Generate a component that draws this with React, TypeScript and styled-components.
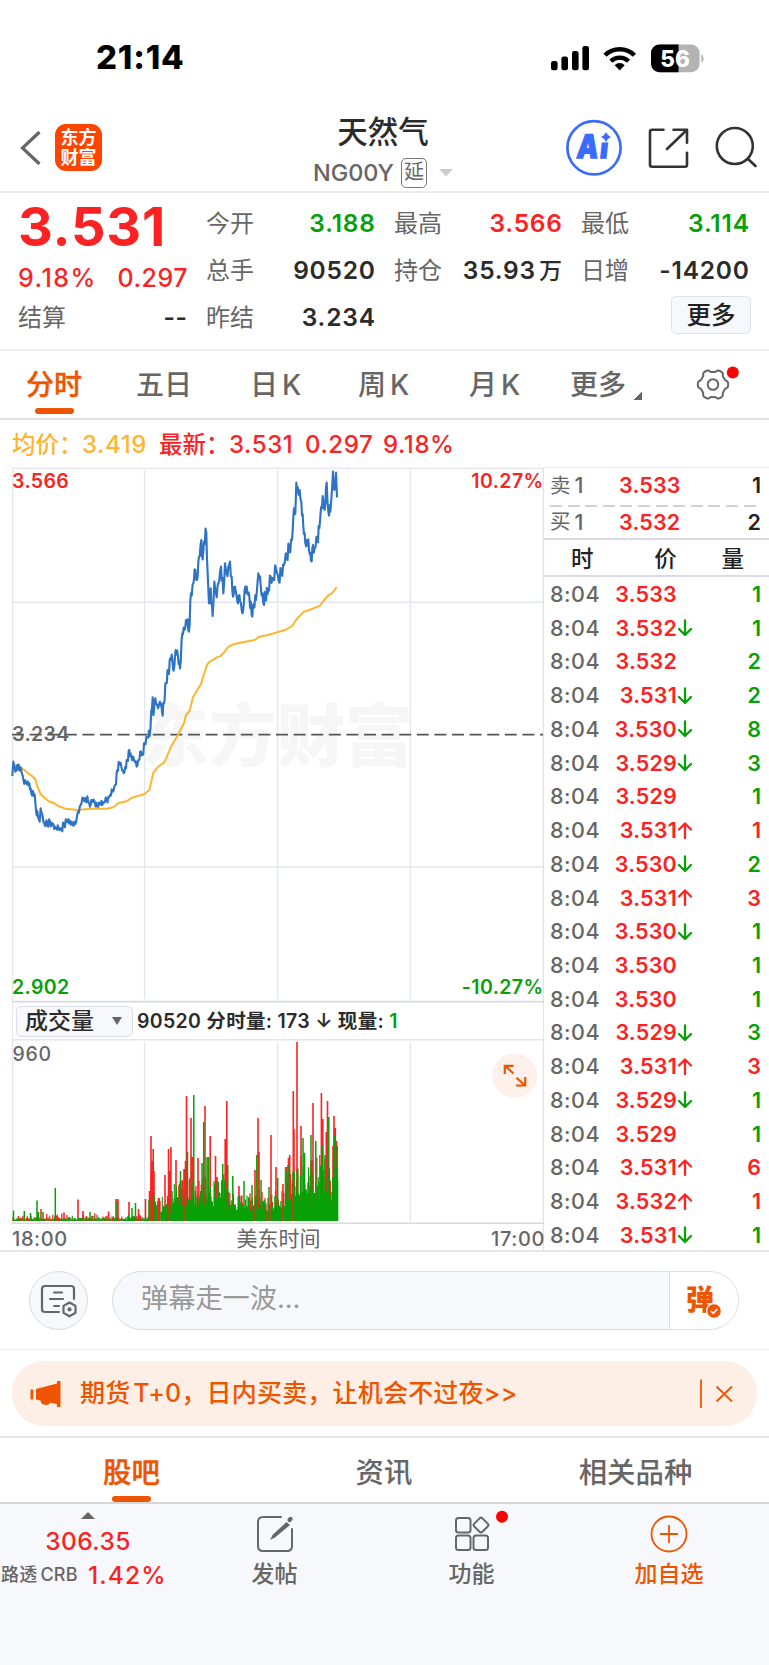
import React from "react";
import styled, { createGlobalStyle } from "styled-components";

const RED = "#fa2222";
const GREEN = "#07a007";
const ORANGE = "#ee5500";
const GRAY = "#666";
const INK = "#2b2b2b";
const FONT = `Inter, "Noto Sans CJK SC", sans-serif`;

const Global = createGlobalStyle`
  * { box-sizing: border-box; }
  body { margin: 0; background: #fff; font-family: ${FONT}; color: ${INK}; line-height: 1.25; }
  svg { display: block; flex: none; overflow: visible; }
  svg text { font-family: ${FONT}; }
`;

const Page = styled.div`
  width: 769px;
  height: 1665px;
  display: flex;
  flex-direction: column;
  overflow: hidden;
  white-space: nowrap;
`;

/* status bar */
const StatusBar = styled.div`
  height: 108px;
  padding: 44px 62px 0 96px;
  display: flex;
  justify-content: space-between;
  align-items: flex-start;
`;
const Clock = styled.div`
  font-size: 33px;
  line-height: 27px;
  font-weight: 800;
  letter-spacing: 0.8px;
  color: #000;
`;

/* title bar */
const TitleBar = styled.header`
  height: 85px;
  border-bottom: 2px solid #ececec;
  display: grid;
  grid-template-columns: 230px 1fr 230px;
`;
const TitleLeft = styled.div`
  display: flex;
  align-items: flex-start;
  padding: 16px 0 0 20px;
  gap: 13px;
`;
const AppLogo = styled.div`
  width: 47px;
  height: 47px;
  border-radius: 11px;
  background: #ff4400;
  color: #fff;
  font-size: 18px;
  line-height: 19.5px;
  font-weight: 700;
  text-align: center;
  padding-top: 4px;
`;
const TitleCenter = styled.div`
  display: flex;
  flex-direction: column;
  align-items: center;
  padding-right: 3px;
`;
const Title = styled.div`
  font-size: 30.5px;
  line-height: 36px;
  margin-top: 6px;
  font-weight: 500;
`;
const SubTitle = styled.div`
  display: flex;
  align-items: center;
  height: 30px;
  margin-top: 8px;
  font-size: 23.5px;
  font-weight: 500;
  letter-spacing: -0.1px;
  color: ${GRAY};
`;
const DelayTag = styled.span`
  width: 26px;
  height: 30px;
  margin: 0 12px 0 7px;
  border: 1.5px solid #777;
  border-radius: 5px;
  font-size: 20px;
  line-height: 27px;
  font-weight: 400;
  text-align: center;
`;
const TitleRight = styled.div`
  display: flex;
  align-items: flex-start;
  padding-top: 11px;
  padding-left: 27px;
`;

/* quote summary */
const Quote = styled.section`
  height: 158px;
  border-bottom: 2px solid #efefef;
  padding: 7px 19px 0 18px;
  display: grid;
  grid-template-columns: 169px 169px 168px 168px;
  column-gap: 19px;
`;
const QuoteCol = styled.div`
  display: flex;
  flex-direction: column;
`;
const BigPrice = styled.div`
  font-size: 54px;
  line-height: 54px;
  height: 54px;
  font-weight: 700;
  letter-spacing: 0.8px;
  color: ${RED};
`;
const ChangeRow = styled.div`
  display: flex;
  justify-content: space-between;
  height: 40px;
  line-height: 48px;
  font-size: 25px;
  font-weight: 500;
  letter-spacing: 0.5px;
  margin-right: -1px;
  color: ${RED};
`;
const Percent = styled.span`
  letter-spacing: 1.5px;
`;
const Pair = styled.div<{ $color?: string }>`
  display: flex;
  justify-content: space-between;
  align-items: center;
  height: 47px;
  font-size: 24.5px;
  font-weight: 600;
  color: ${(p) => p.$color || INK};
`;
const PairLabel = styled.span`
  font-size: 24px;
  font-weight: 400;
  color: ${GRAY};
`;
const Num = styled.span`
  letter-spacing: 0.8px;
  margin-right: -0.8px;
`;
const Unit = styled.span`
  margin-left: 3px;
  font-size: 23px;
  font-weight: 500;
`;
const MoreButton = styled.button`
  align-self: flex-end;
  width: 80px;
  height: 38px;
  margin: 2px -2px 0 0;
  padding: 0;
  border: 1.5px solid #dfe1e8;
  border-radius: 5px;
  background: #f7f8fb;
  font: 500 24.5px/35px ${FONT};
  color: #222;
`;

/* period tabs */
const PeriodTabs = styled.nav`
  height: 69px;
  border-bottom: 2px solid #e1e1e7;
  padding: 0 0 0 26px;
  display: flex;
`;
const PeriodTab = styled.div<{ $w: number; $active?: boolean }>`
  width: ${(p) => p.$w}px;
  font-size: 28px;
  line-height: 69px;
  font-weight: 500;
  color: ${(p) => (p.$active ? ORANGE : GRAY)};
  -webkit-text-stroke: ${(p) => (p.$active ? "0.4px" : "0")} currentColor;
  display: flex;
  gap: 4px;
  position: relative;
`;
const Underline = styled.i<{ $left: number; $top: number }>`
  position: absolute;
  left: ${(p) => p.$left}px;
  top: ${(p) => p.$top}px;
  width: 39px;
  height: 6px;
  border-radius: 3px;
  background: ${ORANGE};
`;
const Corner = styled.i`
  width: 8px;
  height: 8px;
  margin: 41px 0 0 4px;
  background: linear-gradient(135deg, transparent 50%, ${GRAY} 50%);
`;
const GearBox = styled.div`
  margin: 15px 0 0 1px;
`;

/* average / latest line */
const Legend = styled.div`
  height: 47px;
  padding: 3px 0 0 12px;
  display: flex;
  align-items: center;
  font-size: 24px;
  font-weight: 500;
  color: ${RED};
`;
const LegendItem = styled.span<{ $w: number; $color?: string; $cjk?: boolean }>`
  width: ${(p) => p.$w}px;
  color: ${(p) => p.$color || RED};
  font-size: ${(p) => (p.$cjk ? 23.5 : 24)}px;
  letter-spacing: ${(p) => (p.$cjk ? 0 : 0.6)}px;
`;

/* market body */
const Market = styled.section`
  height: 785px;
  display: flex;
  border-bottom: 2px solid #e6e6ea;
`;
const ChartCol = styled.div`
  width: 532px;
  margin-left: 12px;
  display: flex;
  flex-direction: column;
`;
const VolumeBar = styled.div`
  height: 36px;
  flex: none;
  display: flex;
  align-items: center;
  padding-left: 3px;
  border-left: 1px solid #e6e8f0;
  border-right: 1.5px solid #dfe3ea;
  font-size: 19.5px;
  font-weight: 600;
  letter-spacing: 0.3px;
`;
const IndicatorSelect = styled.div`
  width: 117px;
  height: 31px;
  margin-right: 4px;
  padding: 0 10px 0 8px;
  display: flex;
  align-items: center;
  justify-content: space-between;
  border: 1.5px solid #dcdee6;
  border-radius: 5px;
  background: #f7f8fb;
  font-size: 23px;
  font-weight: 500;
  letter-spacing: 0;
`;
const Axis = styled.div`
  height: 25px;
  flex: none;
  display: flex;
  align-items: center;
  justify-content: space-between;
  padding-top: 3px;
  border-right: 1.5px solid #dfe3ea;
  font-size: 20px;
  font-weight: 500;
  letter-spacing: 0.6px;
  color: ${GRAY};
`;
const AxisMid = styled.span`
  font-size: 21px;
  font-weight: 400;
  letter-spacing: 0;
  margin-right: 2px;
`;
const AxisEnd = styled.span`
  margin-right: -2px;
`;

const BookCol = styled.div`
  width: 225px;
  display: flex;
  flex-direction: column;
  font-size: 21.5px;
  font-weight: 600;
`;
const BookTop = styled.div`
  height: 73px;
  flex: none;
  border-top: 1.5px solid #e9e9ec;
  border-bottom: 2px solid #d9dae2;
  padding: 0 0 0 6px;
`;
const DashLine = styled.div`
  height: 2px;
  width: 206px;
  background: repeating-linear-gradient(90deg, #cfd2da 0 12px, transparent 12px 17.6px);
`;
const Level = styled.div<{ $h: number; $pb?: number }>`
  height: ${(p) => p.$h}px;
  padding: 0 8px ${(p) => p.$pb || 0}px 0;
  display: grid;
  grid-template-columns: 69px 1fr 55px;
  align-items: center;
`;
const LevelName = styled.span`
  font-size: 20.5px;
  color: ${GRAY};
  font-weight: 400;
  display: flex;
  align-items: center;
  gap: 4px;
`;
const Digit = styled.b`
  font-size: 21.5px;
  font-weight: 500;
`;
const LevelPrice = styled.span`
  color: ${RED};
  letter-spacing: 0.2px;
`;
const Qty = styled.span<{ $color?: string }>`
  color: ${(p) => p.$color || "#222"};
  text-align: right;
`;
const TapeHead = styled.div`
  height: 37px;
  flex: none;
  border-bottom: 2px solid #d9dae2;
  padding: 4px 25px 0 27px;
  display: flex;
  justify-content: space-between;
  align-items: center;
  font-size: 22.5px;
  font-weight: 500;
  color: #222;
`;
const PriceHead = styled.span`
  margin-left: 16px;
`;
const TapeRow = styled.div`
  height: 33.74px;
  flex: none;
  padding: 1px 8px 0 6px;
  display: grid;
  grid-template-columns: 52px 75px 16px 1fr;
  align-items: center;
`;
const TapeTime = styled.span`
  color: ${GRAY};
  font-weight: 500;
  letter-spacing: 0.5px;
`;
const TapePrice = styled.span`
  color: ${RED};
  text-align: right;
  letter-spacing: 0.2px;
`;

/* comment bar */
const CommentBar = styled.section`
  height: 98px;
  border-bottom: 1.5px solid #f1f1f3;
  padding: 19px 30px 0 29px;
  display: flex;
  justify-content: space-between;
`;
const RoundButton = styled.div`
  width: 59px;
  height: 59px;
  border: 1px solid #d9dbe2;
  border-radius: 50%;
  background: #f7f8fb;
  display: grid;
  place-items: center;
`;
const InputPill = styled.div`
  width: 627px;
  height: 59px;
  border: 1.2px solid #d9dbe2;
  border-radius: 30px;
  background: #f7f8fb;
  display: flex;
  overflow: hidden;
`;
const Placeholder = styled.div`
  flex: 1;
  padding-left: 28px;
  font-size: 27.2px;
  line-height: 54px;
  color: #999;
`;
const SendPart = styled.div`
  width: 69px;
  border-left: 1.2px solid #d9dbe2;
  background: #fff;
  padding: 8px 0 0 16px;
`;

/* promo */
const PromoWrap = styled.section`
  height: 88px;
  border-bottom: 2px solid #e6e6e8;
  padding: 11px 12px 0;
`;
const Promo = styled.div`
  height: 65px;
  border-radius: 32px;
  background: #fdeee6;
  color: ${ORANGE};
  display: flex;
  align-items: center;
  padding: 0 24px 0 18px;
`;
const PromoText = styled.div`
  flex: 1;
  padding: 1px 0 0 19px;
  font-size: 25px;
  font-weight: 500;
  letter-spacing: 0.2px;
  word-spacing: -4px;
`;

/* content tabs */
const ContentTabs = styled.nav`
  height: 66px;
  border-bottom: 2px solid #d5d7db;
  display: grid;
  grid-template-columns: 263px 242px 261px;
`;
const ContentTab = styled.div<{ $active?: boolean }>`
  text-align: center;
  font-size: 28.4px;
  line-height: 70px;
  font-weight: 500;
  color: ${(p) => (p.$active ? ORANGE : GRAY)};
  -webkit-text-stroke: ${(p) => (p.$active ? "0.4px" : "0")} currentColor;
  position: relative;
`;

/* bottom bar */
const BottomBar = styled.footer`
  flex: 1;
  background: #f7f8fb;
  display: grid;
  grid-template-columns: 176px 197px 197px 198px;
`;
const IndexCell = styled.div`
  display: flex;
  flex-direction: column;
  align-items: center;
  padding-top: 8px;
  color: ${RED};
  font-size: 24.5px;
  font-weight: 500;
`;
const IndexValue = styled.div`
  line-height: 30px;
  margin-top: 7px;
  letter-spacing: 0.4px;
`;
const IndexRow = styled.div`
  align-self: flex-start;
  display: flex;
  align-items: center;
  height: 32px;
  margin-top: 3px;
  padding-left: 1px;
  letter-spacing: 1.1px;
`;
const IndexName = styled.span`
  width: 87px;
  font-size: 18px;
  letter-spacing: 0.2px;
  word-spacing: -2px;
  color: ${GRAY};
`;
const Action = styled.div<{ $color?: string }>`
  display: flex;
  flex-direction: column;
  align-items: center;
  padding-top: 8px;
  color: ${(p) => p.$color || GRAY};
  font-size: 23px;
  font-weight: 500;
  line-height: 36px;
`;

const Tri = ({ w, h, color, up }: { w: number; h: number; color: string; up?: boolean }) => (
  <svg width={w} height={h} viewBox="0 0 10 10" preserveAspectRatio="none">
    <path d={up ? "M5 0L10 10H0Z" : "M0 0H10L5 10Z"} fill={color} />
  </svg>
);

/* seeded noise keeps the drawing stable between renders */
const makeRandom = (seed: number) => () => {
  seed = (seed * 1664525 + 1013904223) % 4294967296;
  return seed / 4294967296;
};

type Pt = [number, number];
/* intraday price, in thirds of a pixel from the top left of the plot */
const PRICE: Pt[] = [
  [37,948],[40,905],[46,935],[52,915],[58,930],[64,932],[70,958],[78,968],[88,970],[94,1000],[104,1003],[108,1050],[114,1070],[119,1085],[122,1045],[128,1070],[134,1095],[142,1092],[150,1085],[160,1092],[168,1105],[176,1108],[184,1108],[192,1092],[200,1085],[210,1082],[218,1095],[226,1092],[234,1055],[242,1035],[250,1015],[258,1025],[264,1020],[270,1040],[276,1020],[284,1025],[292,1040],[300,1032],[312,1028],[320,1018],[330,1005],[338,995],[346,975],[352,930],[358,910],[364,920],[371,940],[376,920],[382,900],[388,870],[394,890],[402,898],[410,920],[416,900],[423,875],[428,885],[434,850],[442,832],[449,828],[454,750],[458,712],[460,765],[466,715],[474,745],[480,725],[486,755],[492,730],[498,670],[505,640],[511,595],[517,600],[521,632],[527,570],[534,590],[540,625],[547,520],[553,510],[558,480],[563,478],[567,515],[573,400],[580,370],[586,330],[591,360],[597,290],[604,240],[608,298],[612,245],[619,218],[623,340],[627,430],[632,385],[638,468],[643,365],[648,400],[655,370],[663,320],[670,400],[675,310],[680,340],[690,305],[695,350],[699,410],[705,380],[712,425],[718,405],[725,450],[729,455],[736,380],[742,395],[748,410],[755,465],[761,432],[768,420],[775,340],[782,375],[790,430],[796,405],[805,390],[812,350],[820,360],[828,325],[836,362],[844,335],[852,315],[860,285],[868,265],[876,240],[882,145],[886,160],[889,68],[895,100],[899,90],[904,125],[910,200],[916,250],[921,240],[927,270],[933,302],[939,255],[944,265],[952,245],[958,205],[964,140],[970,125],[974,150],[980,68],[985,155],[991,155],[996,90],[999,35],[1003,90],[1008,38],[1011,112],
];
const AVERAGE: Pt[] = [
  [40,912],[56,920],[70,928],[84,940],[96,948],[106,958],[112,980],[122,1002],[134,1014],[148,1025],[160,1028],[174,1038],[196,1046],[234,1050],[270,1046],[320,1046],[340,1042],[356,1029],[380,1024],[394,1014],[416,1007],[432,1003],[448,990],[454,965],[460,938],[475,920],[492,908],[500,892],[514,858],[530,832],[545,803],[552,790],[558,765],[569,752],[579,712],[590,693],[603,672],[612,642],[622,613],[630,604],[642,598],[650,592],[662,588],[674,575],[684,561],[700,553],[720,548],[764,540],[778,530],[804,525],[830,517],[856,510],[876,498],[892,475],[912,455],[936,447],[960,437],[974,418],[986,405],[996,400],[1010,382],
];

const buildPrice = () => {
  const rnd = makeRandom(11);
  const out: string[] = [];
  for (let i = 0; i < PRICE.length - 1; i++) {
    const [x0, y0] = PRICE[i];
    const [x1, y1] = PRICE[i + 1];
    out.push(`${x0},${y0}`);
    const n = Math.max(1, Math.round((x1 - x0) / 2.3));
    for (let k = 1; k < n; k++) {
      const t = k / n;
      const j = (k % 2 ? 1 : -1) * rnd() * (x0 > 440 ? 22 : 13);
      out.push(`${(x0 + (x1 - x0) * t).toFixed(1)},${Math.max(34, y0 + (y1 - y0) * t + j).toFixed(1)}`);
    }
  }
  out.push(PRICE[PRICE.length - 1].join(","));
  return out.join(" ");
};

/* position, height and colour of the tall volume bars */
const SPIKES: [number, number, 0 | 1][] = [
  [13.5,10.5,1],[24.3,10,1],[30.5,8,1],[37,20.5,1],[41,12,0],[38.5,9,1],[43,9,1],[55.3,33,1],[64,8.5,0],[78,21.5,0],[83,10,0],[90,9,1],[108.5,9.5,0],[116,22,0],[118,22,0],[117,20,1],[129,19,0],[132,13,1],[135.5,18,1],[138.5,12,0],[145.5,22,0],[149.5,30,0],[151,85,0],[152,60,0],[153.2,72,0],[154,50,0],[154.3,26,1],[158.5,23,0],[165,46,0],[168.5,72,0],[169.7,50,0],[170.9,74,0],[172,30,1],[176,61,0],[180.5,50,1],[184,52,0],[185.5,60,0],[186.5,125,0],[187.5,69,1],[191,103,0],[192.3,64,0],[193.8,126,1],[198,63,0],[202,58,1],[203.7,99,1],[205,115,0],[207,64,1],[208.6,64,1],[210.2,85,0],[215.5,65,0],[217,44,0],[222.7,57,1],[225.2,82,0],[226.8,120,0],[227.8,56,1],[232.8,45,1],[239,35,0],[244,40,1],[252,36,1],[255,51,0],[256.8,66,1],[258,103,0],[259,69,0],[261,41,1],[269,34,1],[271,86,0],[276,54,0],[277.7,43,1],[283,37,0],[286.5,54,0],[288,56,1],[289.7,66,0],[293.3,130,0],[294,92,0],[297,179,0],[297.5,52,1],[301,95,0],[303,83,1],[304.6,68,1],[311,86,1],[313,118,0],[315.8,80,1],[321.4,128,0],[322.8,102,0],[322.6,76,1],[325,66,1],[326.3,89,0],[327.5,120,0],[328.8,104,1],[333,75,0],[334,105,0],[334.4,86,1],[335.3,93,0],[336.5,80,0],[337.2,75,1],
];

const VolumeBars = () => {
  const rnd = makeRandom(5);
  const red: string[] = [];
  const green: string[] = [];
  for (let x = 13; x < 338; x += 0.75) {
    const busy = x > 148;
    const level = busy ? (x > 285 ? 60 : x > 228 && x < 284 ? 29 : x < 172 ? 26 : 44) : 5;
    const r = rnd();
    const h = level * (0.35 + rnd() * 0.75) * (busy ? 1 : 0.5 + rnd());
    if (r < 0.4) red.push(`M${x.toFixed(1)} 1221V${(1221 - h).toFixed(1)}`);
    else green.push(`M${x.toFixed(1)} 1221V${(1221 - h * (busy ? 0.85 : 0.8)).toFixed(1)}`);
    if (busy && x > 160) green.push(`M${x.toFixed(1)} 1221V${(1221 - level * (0.3 + rnd() * 0.25)).toFixed(1)}`);
  }
  const spikes = (c: 0 | 1) => SPIKES.filter((s) => s[2] === c).map(([x, h]) => `M${x} 1221V${1221 - h}`).join("");
  return (
    <g fill="none">
      <path d={spikes(0)} stroke={RED} strokeWidth="1.6" />
      <path d={red.join("")} stroke={RED} strokeWidth="1.3" />
      <path d={spikes(1)} stroke={GREEN} strokeWidth="1.5" />
      <path d={green.join("")} stroke={GREEN} strokeWidth="1.1" />
      <path d="M151 1221v-48M153 1221v-44M169 1221v-40M184 1221v-26M255 1221v-16M266 1221v-18M271 1221v-15M282 1221v-30M293 1221v-42" stroke={RED} strokeWidth="1.2" />
    </g>
  );
};

const PriceChart = () => (
  <svg width="532" height="536" viewBox="12 467 532 536">
    <text x="141" y="761" fontSize="68" fontWeight="900" fill="#f6f6f6">东方财富</text>
    <g stroke="#e3e6ee" strokeWidth="1.4" fill="none">
      <path d="M12 468.3H544" stroke="#e9e9ec" strokeWidth="1.6" />
      <path d="M12.6 468V1002M144.6 470V999M277.6 470V999M410.4 470V999M12 602.3H543M12 867H543" />
      <path d="M543.4 468V1003" stroke="#dfe3ea" />
      <path d="M12 1001.6H544" stroke="#d5d9e0" strokeWidth="1.7" />
    </g>
    <path d="M12 734.7H543" stroke="#555" strokeWidth="1.7" strokeDasharray="12 5.6" />
    <g transform="translate(0 460) scale(.33333)" fill="none" strokeLinejoin="round">
      <polyline points={AVERAGE.map((p) => p.join(",")).join(" ")} stroke="#fdb52f" strokeWidth="6" />
      <polyline points={buildPrice()} stroke="#2f74c4" strokeWidth="6.4" />
    </g>
    <g fontSize="19.5" fontWeight="600" letterSpacing=".4">
      <text x="12" y="487.5" fill={RED}>3.566</text>
      <text x="543.5" y="487.5" fill={RED} textAnchor="end">10.27%</text>
      <text x="12" y="740.5" fill={GRAY}>3.234</text>
      <text x="12" y="994" fill={GREEN}>2.902</text>
      <text x="543.5" y="994" fill={GREEN} textAnchor="end">-10.27%</text>
    </g>
  </svg>
);

const VolumeChart = () => (
  <svg width="532" height="186" viewBox="12 1039 532 186">
    <g stroke="#e3e6ee" strokeWidth="1.4" fill="none">
      <path d="M12 1039.7H544M12.6 1039V1224M144.6 1042V1221M277.6 1042V1221M410.4 1042V1221" />
      <path d="M543.4 1039V1225" stroke="#dfe3ea" />
      <path d="M12 1223.3H544" stroke="#d5d9e0" strokeWidth="1.5" />
    </g>
    <VolumeBars />
    <text x="12.5" y="1061" fontSize="19.5" fontWeight="500" letterSpacing=".7" fill={GRAY}>960</text>
    <circle cx="514.6" cy="1075.6" r="22.4" fill="#fef0ea" />
    <path d="M513.5 1073.5L505 1065.8M504.8 1074V1065.8H513.5M516.5 1077.8L525 1085.5M525.2 1077V1085.5H516" fill="none" stroke={ORANGE} strokeWidth="2.2" />
  </svg>
);

/* price, direction, quantity, quantity is red */
const TAPE: [string, "" | "d" | "u", number, boolean][] = [
  ["3.533", "", 1, false], ["3.532", "d", 1, false], ["3.532", "", 2, false], ["3.531", "d", 2, false],
  ["3.530", "d", 8, false], ["3.529", "d", 3, false], ["3.529", "", 1, false], ["3.531", "u", 1, true],
  ["3.530", "d", 2, false], ["3.531", "u", 3, true], ["3.530", "d", 1, false], ["3.530", "", 1, false],
  ["3.530", "", 1, false], ["3.529", "d", 3, false], ["3.531", "u", 3, true], ["3.529", "d", 1, false],
  ["3.529", "", 1, false], ["3.531", "u", 6, true], ["3.532", "u", 1, true], ["3.531", "d", 1, false],
];

const Arrow = ({ dir }: { dir: "" | "d" | "u" }) => (
  <svg width="16" height="18" viewBox="0 0 16 18" fill="none" stroke={dir === "u" ? RED : GREEN} strokeWidth="2.3" strokeLinecap="round" strokeLinejoin="round">
    {dir === "d" && <path d="M8 1.500V15.500M2 10L8 16L14 10" />}
    {dir === "u" && <path d="M8 16V2M2 7.500L8 1.500L14 7.500" />}
  </svg>
);

const gearPath = () => {
  let d = "";
  for (let i = 0; i <= 120; i++) {
    const a = (i / 120) * Math.PI * 2;
    const c = Math.cos(6 * a);
    const r = 13.9 + 1.3 * Math.tanh(c * 2.2);
    d += `${i ? "L" : "M"}${(17 + r * Math.cos(a)).toFixed(2)} ${(18.5 + r * Math.sin(a)).toFixed(2)}`;
  }
  return d + "Z";
};

export default function App() {
  return (
    <Page>
      <Global />
      <StatusBar>
        <Clock>21:14</Clock>
        <svg width="157" height="30" viewBox="550 43 157 30">
          <g fill="#000">
            <rect x="551" y="60" width="6.6" height="9.2" rx="2.2" />
            <rect x="561.4" y="55.5" width="6.6" height="13.7" rx="2.2" />
            <rect x="572" y="50" width="6.6" height="19.2" rx="2.2" />
            <rect x="582.4" y="45" width="6.6" height="24.2" rx="2.2" />
          </g>
          <g fill="none" stroke="#000" strokeWidth="4.4">
            <path d="M605 54.3a21 21 0 0 1 29.4 0" />
            <path d="M610.9 60.2a12.6 12.6 0 0 1 17.6 0" />
          </g>
          <path d="M619.7 69.4l-5-5.2a7 7 0 0 1 10 0z" fill="#000" />
          <clipPath id="cell"><rect x="651" y="43.6" width="48.6" height="27.6" rx="8.5" /></clipPath>
          <g clipPath="url(#cell)">
            <rect x="651" y="43" width="49" height="29" fill="#b3b3b3" />
            <rect x="651" y="43" width="27.5" height="29" fill="#000" />
          </g>
          <path d="M701.3 53.5c3 1 3 7 0 8z" fill="#b3b3b3" />
          <text x="675" y="65.6" fontSize="22.5" fontWeight="800" fill="#fff" textAnchor="middle">56</text>
        </svg>
      </StatusBar>

      <TitleBar>
        <TitleLeft>
          <svg width="22" height="47" viewBox="0 0 22 47" fill="none" stroke="#666" strokeWidth="3.2">
            <path d="M19.5 8L2.5 24L19.5 40" />
          </svg>
          <AppLogo>东方<br />财富</AppLogo>
        </TitleLeft>
        <TitleCenter>
          <Title>天然气</Title>
          <SubTitle>
            NG00Y<DelayTag>延</DelayTag>
            <Tri w={14} h={7.5} color="#ccc" />
          </SubTitle>
        </TitleCenter>
        <TitleRight>
          <svg width="203" height="58" viewBox="566 119 203 58" fill="none">
            <circle cx="594" cy="147.8" r="26.6" stroke="#3a6bff" strokeWidth="2.7" />
            <text transform="translate(576 158.3) skewX(-6) scale(.83 1)" fontSize="32.5" fontWeight="900" letterSpacing="2.2" fill="#3a6bff" stroke="#3a6bff" strokeWidth="1.3">Ai</text>
            <path d="M600 130h13v12.200l-13 .2z" fill="#fff" />
            <path d="M606 132l1.900 3.100 3 1.900-3 1.900-1.900 3.100-1.900-3.100-3-1.900 3-1.900z" fill="#3a6bff" />
            <g stroke="#333" strokeWidth="2.6" strokeLinecap="round" strokeLinejoin="round">
              <path d="M663.5 129.8h-11.5q-2 0-2 2v33q0 2 2 2h33q2 0 2-2v-12M673.5 129.8h13.5v13M686.5 130.3L667 149" />
              <circle cx="734.8" cy="146" r="18" />
              <path d="M748 159l7.5 7" />
            </g>
          </svg>
        </TitleRight>
      </TitleBar>

      <Quote>
        <QuoteCol>
          <BigPrice>3.531</BigPrice>
          <ChangeRow><Percent>9.18%</Percent><span>0.297</span></ChangeRow>
          <Pair><PairLabel>结算</PairLabel><Num>--</Num></Pair>
        </QuoteCol>
        <QuoteCol>
          <Pair $color={GREEN}><PairLabel>今开</PairLabel><Num>3.188</Num></Pair>
          <Pair><PairLabel>总手</PairLabel><Num>90520</Num></Pair>
          <Pair><PairLabel>昨结</PairLabel><Num>3.234</Num></Pair>
        </QuoteCol>
        <QuoteCol>
          <Pair $color={RED}><PairLabel>最高</PairLabel><Num>3.566</Num></Pair>
          <Pair><PairLabel>持仓</PairLabel><Num>35.93<Unit>万</Unit></Num></Pair>
        </QuoteCol>
        <QuoteCol>
          <Pair $color={GREEN}><PairLabel>最低</PairLabel><Num>3.114</Num></Pair>
          <Pair><PairLabel>日增</PairLabel><Num>-14200</Num></Pair>
          <MoreButton>更多</MoreButton>
        </QuoteCol>
      </Quote>

      <PeriodTabs>
        <PeriodTab $w={110} $active>分时<Underline $left={9} $top={57} /></PeriodTab>
        <PeriodTab $w={114}>五日</PeriodTab>
        <PeriodTab $w={108}><span>日</span><span>K</span></PeriodTab>
        <PeriodTab $w={111}><span>周</span><span>K</span></PeriodTab>
        <PeriodTab $w={101}><span>月</span><span>K</span></PeriodTab>
        <PeriodTab $w={125}>更多<Corner /></PeriodTab>
        <GearBox>
          <svg width="46" height="38" viewBox="0 0 46 38">
            <g fill="none" stroke={GRAY} strokeWidth="2">
              <path d={gearPath()} />
              <circle cx="17" cy="18.5" r="5.3" />
            </g>
            <circle cx="36.8" cy="6.6" r="6" fill="#f00" />
          </svg>
        </GearBox>
      </PeriodTabs>

      <Legend>
        <LegendItem $w={70} $cjk $color="#fdb52f">均价：</LegendItem>
        <LegendItem $w={77} $color="#fdb52f">3.419</LegendItem>
        <LegendItem $w={70} $cjk>最新：</LegendItem>
        <LegendItem $w={76}>3.531</LegendItem>
        <LegendItem $w={78}>0.297</LegendItem>
        <LegendItem $w={80}>9.18%</LegendItem>
      </Legend>

      <Market>
        <ChartCol>
          <PriceChart />
          <VolumeBar>
            <IndicatorSelect>成交量<Tri w={10} h={8} color={GRAY} /></IndicatorSelect>
            90520 分时量: 173 ↓ 现量:&nbsp;<Qty $color={GREEN}>1</Qty>
          </VolumeBar>
          <VolumeChart />
          <Axis><span>18:00</span><AxisMid>美东时间</AxisMid><AxisEnd>17:00</AxisEnd></Axis>
        </ChartCol>
        <BookCol>
          <BookTop>
            <Level $h={37} $pb={2}><LevelName>卖<Digit>1</Digit></LevelName><LevelPrice>3.533</LevelPrice><Qty>1</Qty></Level>
            <DashLine />
            <Level $h={30}><LevelName>买<Digit>1</Digit></LevelName><LevelPrice>3.532</LevelPrice><Qty>2</Qty></Level>
          </BookTop>
          <TapeHead><span>时</span><PriceHead>价</PriceHead><span>量</span></TapeHead>
          {TAPE.map(([price, dir, qty, up], i) => (
            <TapeRow key={i}>
              <TapeTime>8:04</TapeTime>
              <TapePrice>{price}</TapePrice>
              <Arrow dir={dir} />
              <Qty $color={up ? RED : GREEN}>{qty}</Qty>
            </TapeRow>
          ))}
        </BookCol>
      </Market>

      <CommentBar>
        <RoundButton>
          <svg width="36" height="34" viewBox="1 0 36 34" fill="none" stroke={GRAY} strokeWidth="2.2" strokeLinecap="round" strokeLinejoin="round">
            <path d="M34 15V5q0-3-3-3H5Q2 2 2 5v20q0 3 3 3h14M14 8.5h8M10 15h13M14 22h5" />
            <path d="M29.5 18.5l6 3.4v7l-6 3.4-6-3.4v-7z" />
            <circle cx="29.5" cy="25.4" r="1" fill={GRAY} />
          </svg>
        </RoundButton>
        <InputPill>
          <Placeholder>弹幕走一波...</Placeholder>
          <SendPart>
            <svg width="40" height="40" viewBox="0 0 40 40">
              <text x="0" y="30" fontSize="28" fontWeight="900" fill={ORANGE}>弹</text>
              <circle cx="28" cy="31" r="8" fill="#fff" />
              <circle cx="28" cy="31" r="6.8" fill={ORANGE} />
              <path d="M24.8 31l2.4 2.4 4.2-4.4" fill="none" stroke="#fff" strokeWidth="1.7" />
            </svg>
          </SendPart>
        </InputPill>
      </CommentBar>

      <PromoWrap>
        <Promo>
          <svg width="31" height="26" viewBox="0 0 31 26" fill={ORANGE}>
            <path d="M.5 8.500h2.800v10H.5zM6 8L27 2.500V0h3.500v26H27v-3l-7-1.200c-1 3-5 2.500-7.500 1.200-2-1-1.500-2.500-2-3.500L6 18.500z" />
          </svg>
          <PromoText>期货 T+0，日内买卖，让机会不过夜&gt;&gt;</PromoText>
          <svg width="33" height="30" viewBox="0 0 33 30" fill="none" stroke={ORANGE} strokeWidth="1.8">
            <path d="M1 .5V29M16.500 7.500l15.500 15M32 7.500l-15.500 15" />
          </svg>
        </Promo>
      </PromoWrap>

      <ContentTabs>
        <ContentTab $active>股吧<Underline $left={112} $top={58} /></ContentTab>
        <ContentTab>资讯</ContentTab>
        <ContentTab>相关品种</ContentTab>
      </ContentTabs>

      <BottomBar>
        <IndexCell>
          <Tri w={14} h={7} color={GRAY} up />
          <IndexValue>306.35</IndexValue>
          <IndexRow><IndexName>路透 CRB</IndexName>1.42%</IndexRow>
        </IndexCell>
        <Action>
          <svg width="40" height="44" viewBox="0 0 40 44" fill="none" stroke={GRAY} strokeWidth="2" strokeLinecap="round">
            <path d="M26 5H8Q3 5 3 10v24q0 5 5 5h24q5 0 5-5V17" />
            <path d="M34.500 8l1-1" strokeWidth="4.200" />
            <path d="M31.500 10L35 13L20 25.500L15 28L17.500 23z" fill={GRAY} stroke="none" />
          </svg>
          发帖
        </Action>
        <Action>
          <svg width="72" height="44" viewBox="-17 0 72 44" fill="none" stroke={GRAY} strokeWidth="2">
            <rect x="3" y="6" width="14.500" height="14.500" rx="2.500" />
            <rect x="3" y="23.500" width="14.500" height="14.500" rx="2.500" />
            <rect x="20.500" y="23.500" width="14.500" height="14.500" rx="2.500" />
            <rect x="22.300" y="7.300" width="11.500" height="11.500" rx="2" transform="rotate(45 28 13)" />
            <circle cx="49" cy="4.800" r="6" fill="#f00" stroke="none" />
          </svg>
          功能
        </Action>
        <Action $color={ORANGE}>
          <svg width="40" height="44" viewBox="0 0 40 44" fill="none" stroke={ORANGE} strokeWidth="1.800">
            <circle cx="20" cy="22" r="17.500" />
            <path d="M20 13v18M11 22h18" />
          </svg>
          加自选
        </Action>
      </BottomBar>
    </Page>
  );
}
